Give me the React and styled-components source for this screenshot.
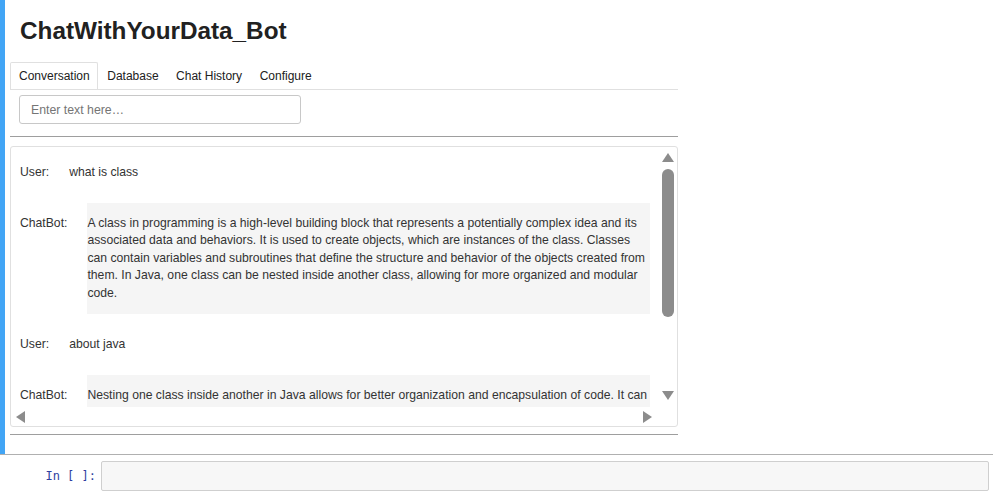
import React from 'react';
import styled, { createGlobalStyle } from 'styled-components';

const Global = createGlobalStyle`
  html, body { margin: 0; padding: 0; background: #fff; }
  body { font-family: "Liberation Sans", Arial, sans-serif; }
  * { box-sizing: border-box; }
`;

const Page = styled.div`
  width: 993px;
  height: 500px;
  overflow: hidden;
  background: #fff;
`;

const OutputCell = styled.section`
  height: 454px;
  border-left: 5px solid #42a5f5;
  padding-left: 5px;
  display: flex;
  flex-direction: column;
`;

const Widget = styled.div`
  width: 668px;
  display: flex;
  flex-direction: column;
`;

const Title = styled.h1`
  margin: 17px 0 17px 10px;
  font-size: 24.3px;
  line-height: 28px;
  font-weight: bold;
  color: #212121;
`;

const TabBar = styled.div`
  display: flex;
  border-bottom: 1px solid #e0e0e0;
`;

const Tab = styled.div`
  height: 27px;
  padding: 1px 7.5px 0 8px;
  line-height: 25px;
  font-size: 12px;
  color: #212121;
  border: 1px solid ${(p) => (p.$active ? '#e0e0e0' : 'transparent')};
  border-bottom: none;
  border-radius: 2px 2px 0 0;
  background: #fff;
  white-space: nowrap;
`;

const TextInput = styled.input`
  margin: 5px 0 0 9px;
  width: 282px;
  height: 29px;
  border: 1px solid #c8c8c8;
  border-radius: 3px;
  padding: 0 11px;
  font-family: "Liberation Sans", Arial, sans-serif;
  font-size: 12.3px;
  color: #212121;
  outline: none;
  &::placeholder { color: #757575; }
`;

const Rule = styled.div`
  margin-top: ${(p) => p.$top}px;
  height: 1px;
  background: #9e9e9e;
`;

const ChatFrame = styled.div`
  margin-top: 9px;
  border: 1px solid #e0e0e0;
  border-radius: 3px;
  display: grid;
  grid-template-columns: 1fr 19px;
  grid-template-rows: 260px 19px;
  background: #fff;
`;

const Viewport = styled.div`
  overflow: hidden;
  padding: 17px 0 0 9px;
`;

const Row = styled.div`
  display: flex;
  gap: 20px;
  margin-bottom: ${(p) => p.$after}px;
  font-size: 12.2px;
  line-height: 17.5px;
  color: #333;
`;

const Label = styled.span`
  flex: none;
  padding-top: ${(p) => (p.$bot ? 12 : 0)}px;
`;

const Bubble = styled.div`
  flex: none;
  width: 563px;
  background: #f5f5f5;
  padding: 12px 0 12px;
`;

const VScroll = styled.div`
  display: flex;
  flex-direction: column;
  align-items: center;
  padding: 6px 0 7px;
`;

const Spacer = styled.div`flex: 1;`;

const ArrowV = styled.div`
  width: 0;
  height: 0;
  border-left: 6px solid transparent;
  border-right: 6px solid transparent;
  ${(p) => (p.$dir === 'up' ? 'border-bottom' : 'border-top')}: 9px solid #8c8c8c;
`;

const Thumb = styled.div`
  margin-top: 7px;
  width: 12px;
  height: 148px;
  border-radius: 6px;
  background: #8c8c8c;
`;

const HScroll = styled.div`
  display: flex;
  align-items: center;
  justify-content: space-between;
  padding: 0 6px 0 5px;
`;

const ArrowH = styled.div`
  width: 0;
  height: 0;
  border-top: 6px solid transparent;
  border-bottom: 6px solid transparent;
  ${(p) => (p.$dir === 'left' ? 'border-right' : 'border-left')}: 9px solid #8c8c8c;
`;

const Separator = styled.div`
  height: 1px;
  background: #b0b0b0;
`;

const InputCell = styled.section`
  display: grid;
  grid-template-columns: 96px 1fr;
  column-gap: 5px;
  align-items: center;
  padding: 6px 4px 0 0;
`;

const Prompt = styled.div`
  text-align: right;
  font-family: "DejaVu Sans Mono", "Liberation Mono", monospace;
  font-size: 12px;
  color: #303f9f;
`;

const CodeArea = styled.div`
  height: 30px;
  background: #f7f7f7;
  border: 1px solid #cfcfcf;
  border-radius: 2px;
`;

const messages = [
  { who: 'User', text: 'what is class' },
  {
    who: 'ChatBot',
    text:
      'A class in programming is a high-level building block that represents a potentially complex idea and its associated data and behaviors. It is used to create objects, which are instances of the class. Classes can contain variables and subroutines that define the structure and behavior of the objects created from them. In Java, one class can be nested inside another class, allowing for more organized and modular code.',
  },
  { who: 'User', text: 'about java' },
  {
    who: 'ChatBot',
    text:
      'Nesting one class inside another in Java allows for better organization and encapsulation of code. It can also make the code more readable and maintainable.',
  },
];

export default function App() {
  return (
    <Page>
      <Global />
      <OutputCell>
        <Widget>
          <Title>ChatWithYourData_Bot</Title>
          <TabBar>
            <Tab $active>Conversation</Tab>
            <Tab>Database</Tab>
            <Tab>Chat History</Tab>
            <Tab>Configure</Tab>
          </TabBar>
          <TextInput placeholder="Enter text here…" />
          <Rule $top={12} />
          <ChatFrame>
            <Viewport>
              {messages.map((m, i) =>
                m.who === 'User' ? (
                  <Row key={i} $after={21}>
                    <Label>User:</Label>
                    <span>{m.text}</span>
                  </Row>
                ) : (
                  <Row key={i} $after={22}>
                    <Label $bot>ChatBot:</Label>
                    <Bubble>{m.text}</Bubble>
                  </Row>
                )
              )}
            </Viewport>
            <VScroll>
              <ArrowV $dir="up" />
              <Thumb />
              <Spacer />
              <ArrowV $dir="down" />
            </VScroll>
            <HScroll>
              <ArrowH $dir="left" />
              <ArrowH $dir="right" />
            </HScroll>
            <div />
          </ChatFrame>
          <Rule $top={7} />
        </Widget>
      </OutputCell>
      <Separator />
      <InputCell>
        <Prompt>In [ ]:</Prompt>
        <CodeArea />
      </InputCell>
    </Page>
  );
}
